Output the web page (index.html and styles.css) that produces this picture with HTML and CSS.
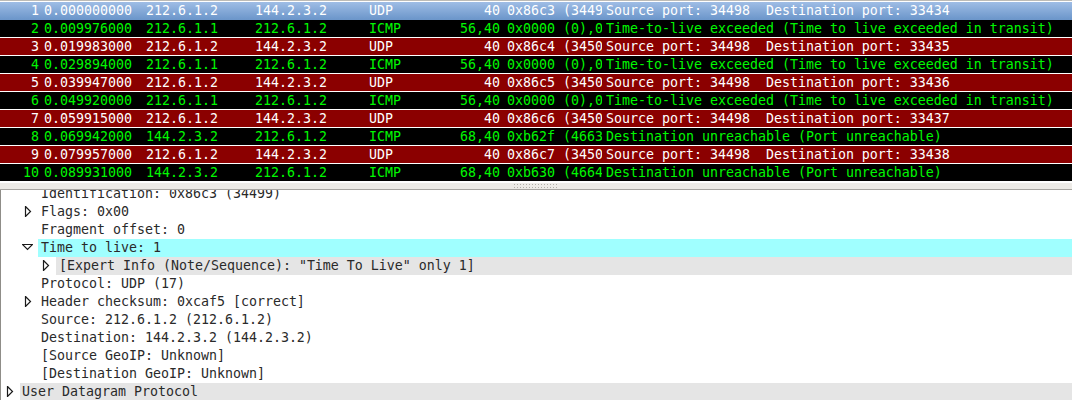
FILE: index.html
```html
<!DOCTYPE html>
<html>
<head>
<meta charset="utf-8">
<title>Packet capture</title>
<link rel="stylesheet" href="styles.css">
</head>
<body>
<div class="app">
  <div class="packets">
    <div class="row sel"><span class="no">1</span><span class="time">0.000000000</span><span class="src">212.6.1.2</span><span class="dst">144.2.3.2</span><span class="proto">UDP</span><span class="len">40</span><span class="id">0x86c3 (34499)</span><span class="info">Source port: 34498  Destination port: 33434</span></div>
    <div class="row icmp"><span class="no">2</span><span class="time">0.009976000</span><span class="src">212.6.1.1</span><span class="dst">212.6.1.2</span><span class="proto">ICMP</span><span class="len">56,40</span><span class="id">0x0000 (0),0x86c3 (34499)</span><span class="info">Time-to-live exceeded (Time to live exceeded in transit)</span></div>
    <div class="row udp"><span class="no">3</span><span class="time">0.019983000</span><span class="src">212.6.1.2</span><span class="dst">144.2.3.2</span><span class="proto">UDP</span><span class="len">40</span><span class="id">0x86c4 (34500)</span><span class="info">Source port: 34498  Destination port: 33435</span></div>
    <div class="row icmp"><span class="no">4</span><span class="time">0.029894000</span><span class="src">212.6.1.1</span><span class="dst">212.6.1.2</span><span class="proto">ICMP</span><span class="len">56,40</span><span class="id">0x0000 (0),0x86c4 (34500)</span><span class="info">Time-to-live exceeded (Time to live exceeded in transit)</span></div>
    <div class="row udp"><span class="no">5</span><span class="time">0.039947000</span><span class="src">212.6.1.2</span><span class="dst">144.2.3.2</span><span class="proto">UDP</span><span class="len">40</span><span class="id">0x86c5 (34501)</span><span class="info">Source port: 34498  Destination port: 33436</span></div>
    <div class="row icmp"><span class="no">6</span><span class="time">0.049920000</span><span class="src">212.6.1.1</span><span class="dst">212.6.1.2</span><span class="proto">ICMP</span><span class="len">56,40</span><span class="id">0x0000 (0),0x86c5 (34501)</span><span class="info">Time-to-live exceeded (Time to live exceeded in transit)</span></div>
    <div class="row udp"><span class="no">7</span><span class="time">0.059915000</span><span class="src">212.6.1.2</span><span class="dst">144.2.3.2</span><span class="proto">UDP</span><span class="len">40</span><span class="id">0x86c6 (34502)</span><span class="info">Source port: 34498  Destination port: 33437</span></div>
    <div class="row icmp"><span class="no">8</span><span class="time">0.069942000</span><span class="src">144.2.3.2</span><span class="dst">212.6.1.2</span><span class="proto">ICMP</span><span class="len">68,40</span><span class="id">0xb62f (46639)</span><span class="info">Destination unreachable (Port unreachable)</span></div>
    <div class="row udp"><span class="no">9</span><span class="time">0.079957000</span><span class="src">212.6.1.2</span><span class="dst">144.2.3.2</span><span class="proto">UDP</span><span class="len">40</span><span class="id">0x86c7 (34503)</span><span class="info">Source port: 34498  Destination port: 33438</span></div>
    <div class="row icmp"><span class="no">10</span><span class="time">0.089931000</span><span class="src">144.2.3.2</span><span class="dst">212.6.1.2</span><span class="proto">ICMP</span><span class="len">68,40</span><span class="id">0xb630 (46640)</span><span class="info">Destination unreachable (Port unreachable)</span></div>
    <div class="row udp stub"></div>
  </div>
  <div class="splitter"><div class="grip"></div></div>
  <div class="tree">
    <div class="line d1 cut">Identification: 0x86c3 (34499)</div>
    <div class="line d1"><svg class="tw" viewBox="0 0 9 11"><path d="M1.5 .5 6.5 5.5 1.5 10.5Z"/></svg>Flags: 0x00</div>
    <div class="line d1">Fragment offset: 0</div>
    <div class="line d1 note"><svg class="tw" viewBox="0 0 11 9"><path d="M.5 1.5H10.5L5.5 6.5Z"/></svg><span class="lbl">Time to live: 1</span></div>
    <div class="line d2 expert"><svg class="tw" viewBox="0 0 9 11"><path d="M1.5 .5 6.5 5.5 1.5 10.5Z"/></svg><span class="lbl">[Expert Info (Note/Sequence): "Time To Live" only 1]</span></div>
    <div class="line d1">Protocol: UDP (17)</div>
    <div class="line d1"><svg class="tw" viewBox="0 0 9 11"><path d="M1.5 .5 6.5 5.5 1.5 10.5Z"/></svg>Header checksum: 0xcaf5 [correct]</div>
    <div class="line d1">Source: 212.6.1.2 (212.6.1.2)</div>
    <div class="line d1">Destination: 144.2.3.2 (144.2.3.2)</div>
    <div class="line d1">[Source GeoIP: Unknown]</div>
    <div class="line d1">[Destination GeoIP: Unknown]</div>
    <div class="line d0 proto-head"><svg class="tw" viewBox="0 0 9 11"><path d="M1.5 .5 6.5 5.5 1.5 10.5Z"/></svg><span class="lbl">User Datagram Protocol</span></div>
  </div>
</div>
</body>
</html>
```
FILE: styles.css
```css
* { box-sizing: border-box; }
html, body { margin: 0; padding: 0; }
body {
  width: 1072px;
  height: 400px;
  overflow: hidden;
  background: #fff;
  font-family: "DejaVu Sans Mono", monospace;
  font-size: 13.29px;
  color: #2a2a2a;
}
.app { display: flex; flex-direction: column; height: 400px; }
.packets {
  height: 183px;
  flex: none;
  overflow: hidden;
  border-top: 1px solid #bdbbb6;
  padding-top: 1px;
  background: #fff;
}
.row {
  display: flex;
  height: 18px;
  line-height: 18px;
  padding-left: 1px;
  border-bottom: 1px solid #fff;
  white-space: pre;
}
.row span { display: block; overflow: hidden; flex: none; }
.sel { background: linear-gradient(#9fbde5, #6d97cb); color: #fff; border-bottom-color: #6d97cb; }
.icmp { background: #000; color: #00f800; }
.udp { background: #8b0000; color: #fff; }
.stub { height: 2px; border: 0; margin-top: 1px; }
.no { width: 38px; text-align: right; }
.time { width: 102px; margin-left: 5px; }
.src { width: 109px; }
.dst { width: 114px; }
.proto { width: 70px; }
.len { width: 61px; text-align: right; }
.id { width: 95px; margin-left: 7px; }
.info { margin-left: 4px; width: 466px; }
.splitter {
  height: 7px;
  flex: none;
  background: #edebe7;
  border-bottom: 1px solid #a8a6a2;
  display: flex;
  justify-content: center;
}
.grip {
  width: 46px;
  height: 6px;
  background-image: radial-gradient(circle, #b0aea8 0.6px, transparent 0.8px);
  background-size: 3px 3px;
}
.tree {
  flex: 1;
  overflow: hidden;
  border-left: 1px solid #8f8d88;
  position: relative;
}
.line {
  height: 18px;
  line-height: 18px;
  display: flex;
  align-items: center;
  white-space: pre;
  position: relative;
}
.cut { margin-top: -5px; }
.d0 { padding-left: 22px; margin-left: -1px; background: #fff; }
.d1 { padding-left: 40px; }
.d2 { padding-left: 58px; }
.tw {
  position: absolute;
  width: 9px;
  height: 11px;
  fill: none;
  stroke: #1a1a1a;
  stroke-width: 1.2;
}
.d0 .tw { left: 6px; top: 3px; }
.d1 .tw { left: 23px; top: 3px; }
.d2 .tw { left: 41px; top: 3px; }
.note::before { content: ""; position: absolute; left: 37px; right: 0; top: 0; bottom: 0; background: #a0ffff; }
.d1.note .tw { left: 21px; top: 4px; width: 11px; height: 9px; }
.note .lbl { position: relative; }
.expert::before { content: ""; position: absolute; left: 55px; right: 0; top: 0; bottom: 0; background: #e5e5e5; }
.expert .lbl { position: relative; }
.proto-head::before { content: ""; position: absolute; left: 20px; right: 0; top: 0; bottom: 0; background: #e5e5e5; }
.proto-head .lbl { position: relative; }
```
